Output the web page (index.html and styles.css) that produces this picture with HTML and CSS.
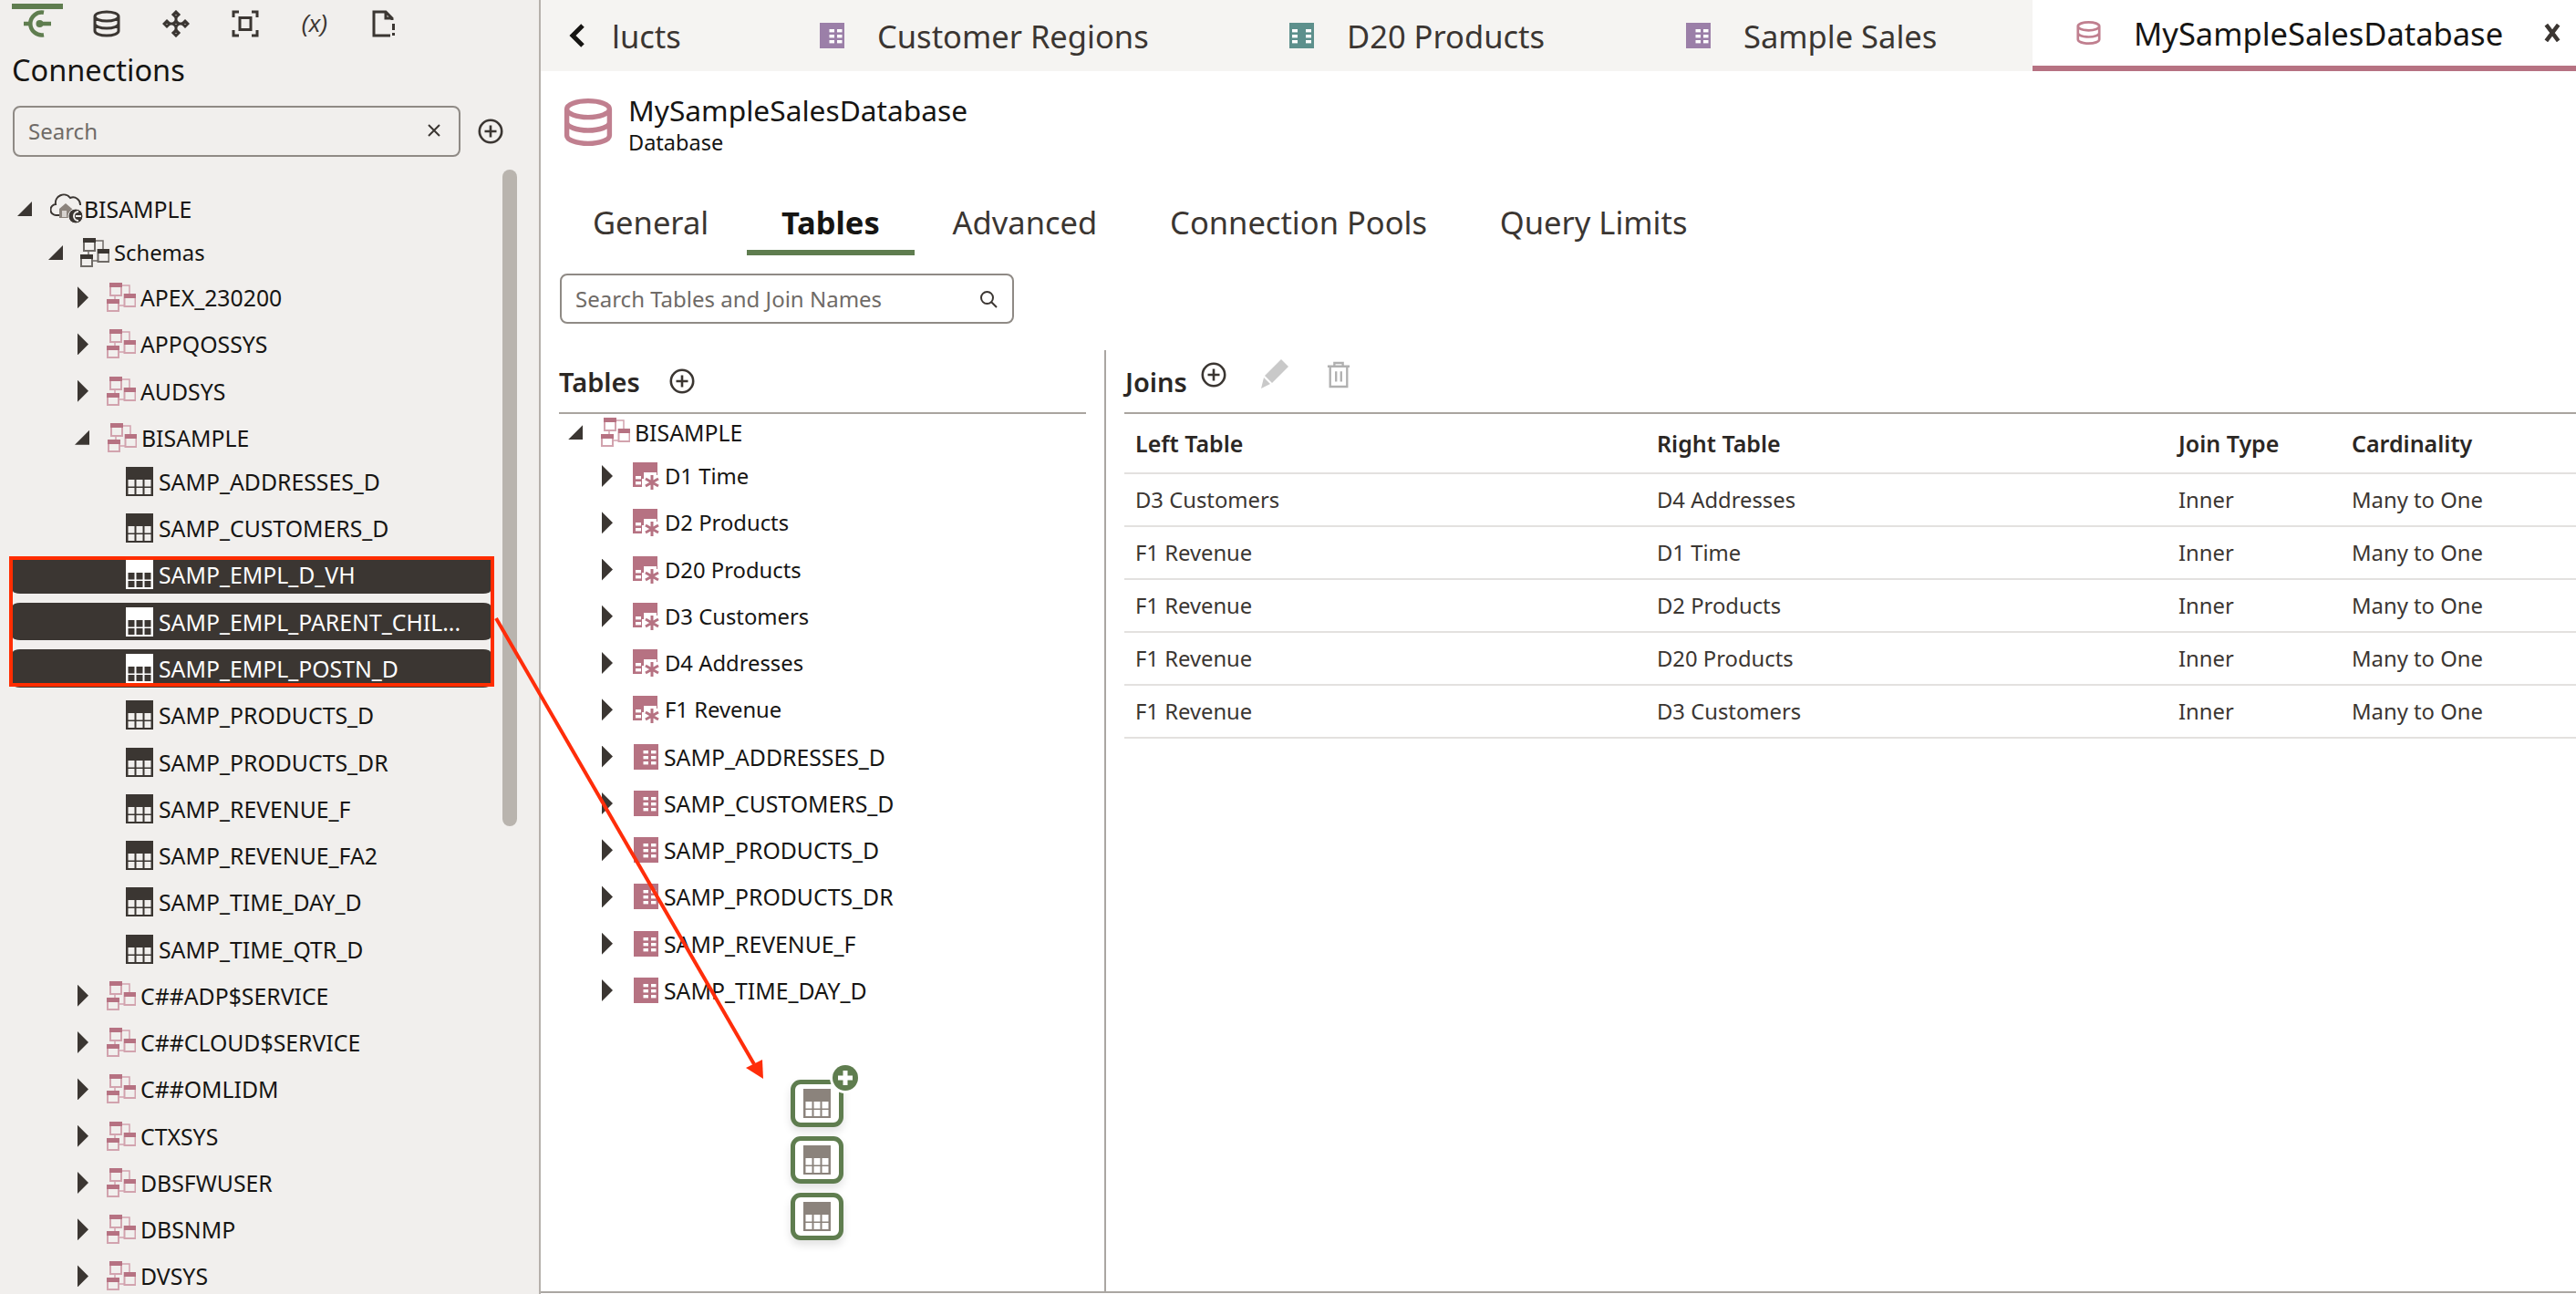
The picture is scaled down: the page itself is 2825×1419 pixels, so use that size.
FILE: index.html
```html
<!DOCTYPE html>
<html lang="en">
<head>
<meta charset="utf-8">
<title>MySampleSalesDatabase</title>
<link rel="stylesheet" href="styles.css">
</head>
<body>
<svg class="sprite" aria-hidden="true">
  <symbol id="i-schema" viewBox="0 0 32 32">
    <path class="thin" d="M16 3h9v9M9 14v4M13 25h6"/>
    <rect class="ln" x="4" y="1" width="12" height="13"/><rect class="fl" x="3" y="0" width="14" height="5"/>
    <rect class="ln" x="19.5" y="13" width="12" height="13"/><rect class="fl" x="19" y="12" width="13" height="5"/>
    <rect class="ln2" x="1" y="19" width="12" height="12"/><rect class="fl" x="0" y="18" width="14" height="5"/>
  </symbol>
  <symbol id="i-table" viewBox="0 0 30 32">
    <rect class="fl" x="0" y="0" width="30" height="32"/>
    <rect class="cell" x="2.5" y="14" width="7" height="7.5"/><rect class="cell" x="11.5" y="14" width="7" height="7.5"/><rect class="cell" x="20.5" y="14" width="7" height="7.5"/>
    <rect class="cell" x="2.5" y="23" width="7" height="7"/><rect class="cell" x="11.5" y="23" width="7" height="7"/><rect class="cell" x="20.5" y="23" width="7" height="7"/>
  </symbol>
  <symbol id="i-tile" viewBox="0 0 27 28">
    <rect class="fl" width="27" height="28"/>
    <g class="wh"><rect x="10.5" y="7" width="5.5" height="3.4"/><rect x="19" y="7" width="5.5" height="3.4"/><rect x="10.5" y="13" width="5.5" height="3.4"/><rect x="19" y="13" width="5.5" height="3.4"/><rect x="10.5" y="19" width="5.5" height="3.4"/><rect x="19" y="19" width="5.5" height="3.4"/></g>
  </symbol>
  <symbol id="i-film" viewBox="0 0 27 28">
    <rect class="fl" width="27" height="28"/>
    <g class="wh"><rect x="3" y="7" width="6" height="3.4"/><rect x="18" y="7" width="6" height="3.4"/><rect x="3" y="13" width="6" height="3.4"/><rect x="18" y="13" width="6" height="3.4"/><rect x="3" y="19" width="6" height="3.4"/><rect x="18" y="19" width="6" height="3.4"/></g>
  </symbol>
  <symbol id="i-dim" viewBox="0 0 30 30">
    <rect class="fl" width="27" height="27"/>
    <g class="wh"><rect x="3" y="15" width="6" height="3.4"/><rect x="3" y="21" width="6" height="3.4"/><rect x="12" y="11" width="14" height="8"/><rect x="10" y="18" width="6" height="9"/><rect x="14" y="14" width="16" height="16"/></g>
    <path class="star" d="M21 14v16M14 18l14 8M28 18l-14 8"/>
  </symbol>
  <symbol id="i-db" viewBox="0 0 30 30">
    <path class="st" d="M2 7a13 5 0 0 1 26 0v16a13 5 0 0 1-26 0zM2 7a13 5 0 0 0 26 0M2 15a13 5 0 0 0 26 0"/>
  </symbol>
  <symbol id="i-plus" viewBox="0 0 28 28">
    <circle class="st2" cx="14" cy="14" r="12.2"/><path class="st2" d="M14 7.5v13M7.5 14h13"/>
  </symbol>
</svg>

<div class="app">
  <aside class="side">
    <nav class="rail">
      <button class="rail-btn on"><svg class="rail-ico" viewBox="0 0 30 30"><path class="conn" d="M22 2.700A12.500 12.500 0 1 0 22 27.300M0 15h6M17 15h13"/><circle class="conn-dot" cx="17.500" cy="15" r="4"/></svg></button>
      <button class="rail-btn"><svg class="rail-ico"><use href="#i-db"/></svg></button>
      <button class="rail-btn"><svg class="rail-ico" viewBox="0 0 30 30"><path class="st" d="M15 6v6M15 18v6M6 15h6M18 15h6"/><path class="st" d="M15 2l3 3-3 3-3-3zM15 22l3 3-3 3-3-3zM5 12l3 3-3 3-3-3zM25 12l3 3-3 3-3-3zM15 12l3 3-3 3-3-3z"/></svg></button>
      <button class="rail-btn"><svg class="rail-ico" viewBox="0 0 30 30"><path class="st" d="M8 2H2v6M22 2h6v6M8 28H2v-6M22 28h6v-6"/><rect class="st" x="9" y="8.500" width="12" height="13"/></svg></button>
      <button class="rail-btn"><span class="fx">(x)</span></button>
      <button class="rail-btn"><svg class="rail-ico" viewBox="0 0 30 30"><path class="st" d="M24 11V9l-7-7H4v26h18M17 2v7h7"/><path class="st" d="M25.500 15v7M25.500 25v3"/></svg></button>
    </nav>
    <h2 class="side-title">Connections</h2>
    <div class="side-search">
      <div class="field field-side"><span class="ph">Search</span><svg class="x-ico" viewBox="0 0 14 14"><path d="M1 1l12 12M13 1L1 13"/></svg></div>
      <svg class="add-ico"><use href="#i-plus"/></svg>
    </div>
    <div class="tree">
      <div class="row l1"><i class="tw tw-d"></i>
        <svg class="ico ico-cloud" viewBox="0 0 37 34"><path class="st-thin" d="M10 24H7a6 6 0 0 1-1-12 9 9 0 0 1 16-7 8 8 0 0 1 11 8"/><path class="hs" d="M10 17l7-6 7 6v10H10z"/><rect class="hs-w" x="13" y="19" width="5" height="7"/><circle class="bd" cx="28" cy="25" r="8"/><path class="bd-c" d="M31 20a5 5 0 1 0 0 10M28 25h6"/></svg>
        <span>BISAMPLE</span></div>
      <div class="row l2"><i class="tw tw-d"></i><svg class="ico ico-s sch-dk"><use href="#i-schema"/></svg><span>Schemas</span></div>
      <div class="row l3 full"><i class="tw tw-r"></i><svg class="ico ico-s sch"><use href="#i-schema"/></svg><span>APEX_230200</span></div>
      <div class="row l3 full"><i class="tw tw-r"></i><svg class="ico ico-s sch"><use href="#i-schema"/></svg><span>APPQOSSYS</span></div>
      <div class="row l3 full"><i class="tw tw-r"></i><svg class="ico ico-s sch"><use href="#i-schema"/></svg><span>AUDSYS</span></div>
      <div class="row l3 tight"><i class="tw tw-d"></i><svg class="ico ico-s sch"><use href="#i-schema"/></svg><span>BISAMPLE</span></div>
      <div class="row l4 full"><svg class="ico ico-t tb"><use href="#i-table"/></svg><span>SAMP_ADDRESSES_D</span></div>
      <div class="row l4 full"><svg class="ico ico-t tb"><use href="#i-table"/></svg><span>SAMP_CUSTOMERS_D</span></div>
      <div class="row l4 full sel"><svg class="ico ico-t tb"><use href="#i-table"/></svg><span>SAMP_EMPL_D_VH</span></div>
      <div class="row l4 full sel"><svg class="ico ico-t tb"><use href="#i-table"/></svg><span>SAMP_EMPL_PARENT_CHIL...</span></div>
      <div class="row l4 full sel"><svg class="ico ico-t tb"><use href="#i-table"/></svg><span>SAMP_EMPL_POSTN_D</span></div>
      <div class="row l4 full"><svg class="ico ico-t tb"><use href="#i-table"/></svg><span>SAMP_PRODUCTS_D</span></div>
      <div class="row l4 full"><svg class="ico ico-t tb"><use href="#i-table"/></svg><span>SAMP_PRODUCTS_DR</span></div>
      <div class="row l4 full"><svg class="ico ico-t tb"><use href="#i-table"/></svg><span>SAMP_REVENUE_F</span></div>
      <div class="row l4 full"><svg class="ico ico-t tb"><use href="#i-table"/></svg><span>SAMP_REVENUE_FA2</span></div>
      <div class="row l4 full"><svg class="ico ico-t tb"><use href="#i-table"/></svg><span>SAMP_TIME_DAY_D</span></div>
      <div class="row l4 full"><svg class="ico ico-t tb"><use href="#i-table"/></svg><span>SAMP_TIME_QTR_D</span></div>
      <div class="row l3 full"><i class="tw tw-r"></i><svg class="ico ico-s sch"><use href="#i-schema"/></svg><span>C##ADP$SERVICE</span></div>
      <div class="row l3 full"><i class="tw tw-r"></i><svg class="ico ico-s sch"><use href="#i-schema"/></svg><span>C##CLOUD$SERVICE</span></div>
      <div class="row l3 full"><i class="tw tw-r"></i><svg class="ico ico-s sch"><use href="#i-schema"/></svg><span>C##OMLIDM</span></div>
      <div class="row l3 full"><i class="tw tw-r"></i><svg class="ico ico-s sch"><use href="#i-schema"/></svg><span>CTXSYS</span></div>
      <div class="row l3 full"><i class="tw tw-r"></i><svg class="ico ico-s sch"><use href="#i-schema"/></svg><span>DBSFWUSER</span></div>
      <div class="row l3 full"><i class="tw tw-r"></i><svg class="ico ico-s sch"><use href="#i-schema"/></svg><span>DBSNMP</span></div>
      <div class="row l3 full"><i class="tw tw-r"></i><svg class="ico ico-s sch"><use href="#i-schema"/></svg><span>DVSYS</span></div>
    </div>
    <div class="scrollbar"></div>
  </aside>

  <main class="main">
    <div class="tabbar">
      <div class="dtab dtab-first"><svg class="chev" viewBox="0 0 20 28"><path d="M16 3L5 14l11 11"/></svg><span class="lucts">lucts</span></div>
      <div class="dtab"><svg class="dtab-ico purple"><use href="#i-tile"/></svg><span>Customer Regions</span></div>
      <div class="dtab"><svg class="dtab-ico teal"><use href="#i-film"/></svg><span>D20 Products</span></div>
      <div class="dtab"><svg class="dtab-ico purple"><use href="#i-tile"/></svg><span>Sample Sales</span></div>
      <div class="dtab dtab-on"><svg class="dtab-db pinkline"><use href="#i-db"/></svg><span>MySampleSalesDatabase</span><svg class="tab-x" viewBox="0 0 18 18"><path d="M3 1l12 16M15 1L3 17"/></svg></div>
    </div>

    <header class="head">
      <svg class="head-ico pinkline"><use href="#i-db"/></svg>
      <div class="head-txt">
        <div class="head-title">MySampleSalesDatabase</div>
        <div class="head-sub">Database</div>
      </div>
    </header>

    <nav class="tabs">
      <a class="tab">General</a>
      <a class="tab tab-on">Tables</a>
      <a class="tab">Advanced</a>
      <a class="tab">Connection Pools</a>
      <a class="tab">Query Limits</a>
    </nav>

    <div class="field field-main"><span class="ph ph-sm">Search Tables and Join Names</span><svg class="mag" viewBox="0 0 20 20"><circle cx="8.500" cy="8.500" r="6.500"/><path d="M13 13l6 6"/></svg></div>

    <div class="split">
      <section class="left">
        <div class="sec-head"><h3 class="sec-title">Tables</h3><svg class="sec-add"><use href="#i-plus"/></svg></div>
        <div class="rtree">
          <div class="rrow r0"><i class="tw tw-d"></i><svg class="ico ico-s sch"><use href="#i-schema"/></svg><span>BISAMPLE</span></div>
          <div class="rrow r1"><i class="tw tw-r"></i><svg class="ico ico-d dim"><use href="#i-dim"/></svg><span>D1 Time</span></div>
          <div class="rrow r1"><i class="tw tw-r"></i><svg class="ico ico-d dim"><use href="#i-dim"/></svg><span>D2 Products</span></div>
          <div class="rrow r1"><i class="tw tw-r"></i><svg class="ico ico-d dim"><use href="#i-dim"/></svg><span>D20 Products</span></div>
          <div class="rrow r1"><i class="tw tw-r"></i><svg class="ico ico-d dim"><use href="#i-dim"/></svg><span>D3 Customers</span></div>
          <div class="rrow r1"><i class="tw tw-r"></i><svg class="ico ico-d dim"><use href="#i-dim"/></svg><span>D4 Addresses</span></div>
          <div class="rrow r1"><i class="tw tw-r"></i><svg class="ico ico-d dim"><use href="#i-dim"/></svg><span>F1 Revenue</span></div>
          <div class="rrow r2"><i class="tw tw-r"></i><svg class="ico ico-p dim"><use href="#i-tile"/></svg><span>SAMP_ADDRESSES_D</span></div>
          <div class="rrow r2"><i class="tw tw-r"></i><svg class="ico ico-p dim"><use href="#i-tile"/></svg><span>SAMP_CUSTOMERS_D</span></div>
          <div class="rrow r2"><i class="tw tw-r"></i><svg class="ico ico-p dim"><use href="#i-tile"/></svg><span>SAMP_PRODUCTS_D</span></div>
          <div class="rrow r2"><i class="tw tw-r"></i><svg class="ico ico-p dim"><use href="#i-tile"/></svg><span>SAMP_PRODUCTS_DR</span></div>
          <div class="rrow r2"><i class="tw tw-r"></i><svg class="ico ico-p dim"><use href="#i-tile"/></svg><span>SAMP_REVENUE_F</span></div>
          <div class="rrow r2"><i class="tw tw-r"></i><svg class="ico ico-p dim"><use href="#i-tile"/></svg><span>SAMP_TIME_DAY_D</span></div>
        </div>
      </section>
      <section class="right">
        <div class="join-head">
          <h3 class="sec-title">Joins</h3>
          <svg class="join-add"><use href="#i-plus"/></svg>
          <svg class="pencil" viewBox="0 0 32 36"><path d="M23 1l8 8L13 27l-8-8zM4 21l7 7-10 5z"/></svg>
          <svg class="trash" viewBox="0 0 28 32"><path d="M1 6h26M9 6V2h10v4M4 6v24h20V6M11 12v12M17 12v12"/></svg>
        </div>
        <table class="joins">
          <colgroup><col class="c1"><col class="c2"><col class="c3"><col></colgroup>
          <thead><tr><th>Left Table</th><th>Right Table</th><th>Join Type</th><th>Cardinality</th></tr></thead>
          <tbody>
            <tr><td>D3 Customers</td><td>D4 Addresses</td><td>Inner</td><td>Many to One</td></tr>
            <tr><td>F1 Revenue</td><td>D1 Time</td><td>Inner</td><td>Many to One</td></tr>
            <tr><td>F1 Revenue</td><td>D2 Products</td><td>Inner</td><td>Many to One</td></tr>
            <tr><td>F1 Revenue</td><td>D20 Products</td><td>Inner</td><td>Many to One</td></tr>
            <tr><td>F1 Revenue</td><td>D3 Customers</td><td>Inner</td><td>Many to One</td></tr>
          </tbody>
        </table>
      </section>
    </div>
  </main>
</div>

<div class="redbox"></div>
<svg class="arrow" viewBox="0 0 2825 1419"><path class="arrow-l" d="M544 678L827 1167"/><path class="arrow-h" d="M837 1183L818 1171 836 1162z"/></svg>
<div class="drag">
  <div class="tile"><svg class="tile-ico"><use href="#i-table"/></svg><svg class="badge" viewBox="0 0 34 34"><circle class="badge-o" cx="17" cy="17" r="17"/><circle class="badge-g" cx="17" cy="17" r="14"/><path class="badge-p" d="M17 9v16M9 17h16"/></svg></div>
  <div class="tile"><svg class="tile-ico"><use href="#i-table"/></svg></div>
  <div class="tile"><svg class="tile-ico"><use href="#i-table"/></svg></div>
</div>
</body>
</html>
```
FILE: styles.css
```css
*{box-sizing:border-box}
html,body{margin:0;height:1419px;overflow:hidden;background:#fff}
body{font-family:"Noto Sans","Open Sans",sans-serif;color:#161513;position:relative}
.sprite{position:absolute;width:0;height:0}
.app{display:flex;height:1419px}

/* shared svg parts */
.fl{fill:currentColor}
.wh{fill:#fff}
.cell{fill:var(--cell,#fff)}
.ln{fill:none;stroke:var(--soft,currentColor);stroke-width:2}
.ln2{fill:none;stroke:var(--soft,currentColor);stroke-width:2}
.thin{fill:none;stroke:var(--soft,currentColor);stroke-width:1.500}
.star{fill:none;stroke:currentColor;stroke-width:3}
.st{fill:none;stroke:currentColor;stroke-width:3}
.st2{fill:none;stroke:currentColor;stroke-width:2.600}
.st-thin{fill:none;stroke:currentColor;stroke-width:2}

/* sidebar */
.side{width:593px;flex:none;background:#f1efed;border-right:2px solid #b5b0ab;position:relative;overflow:hidden;display:flex;flex-direction:column}
.rail,.side-title,.side-search,.tree{flex:none}
.rail{display:flex;gap:20px;padding:4px 0 0 13px;height:48px}
.rail-btn{width:56px;height:38px;border:0;border-top:6px solid transparent;background:none;padding:0;display:flex;align-items:center;justify-content:center;color:#3b3632}
.rail-btn.on{border-top-color:#5f7d4f}
.rail-ico{width:30px;height:30px}
.conn{fill:none;stroke:#5f7d4f;stroke-width:4.500}
.conn-dot{fill:#5f7d4f}
.fx{font-size:25px;font-style:italic;font-weight:500;color:#3b3632}
.side-title{margin:9px 0 0 13px;font-size:32.500px;font-weight:400;line-height:40px;height:59px}
.side-search{display:flex;align-items:center;margin-left:14px;gap:19px}
.field{display:flex;align-items:center;justify-content:space-between;border:2px solid #8f8a85;border-radius:8px}
.field-side{width:491px;height:56px;padding:0 20px 2px 15px}
.field-main{width:498px;height:55px;margin:20px 0 0 21px;padding:0 16px 0 15px;background:#fff}
.ph{color:#6f6b67;font-size:24px}
.ph-sm{font-size:24px}
.x-ico{width:14px;height:14px;fill:none;stroke:#3b3632;stroke-width:2}
.mag{width:20px;height:20px;fill:none;stroke:#3b3632;stroke-width:2}
.add-ico{width:28px;height:28px;color:#3b3632}

.tree{margin-top:32.500px;font-size:24.800px;color:#161513}
.row{display:flex;align-items:center;height:49px;white-space:nowrap}
.l2{height:47px;font-size:23.800px}
.full{height:51.270px}
.tight{height:48px;padding-top:3px}
.tw{display:block;flex:none;background:#3b3632}
.tw-r{width:12px;height:24px;clip-path:polygon(0 0,100% 50%,0 100%)}
.tw-d{width:16px;height:16px;clip-path:polygon(0 100%,100% 0,100% 100%)}
.ico{flex:none;display:block}
.ico-s{width:32px;height:32px}
.ico-t{width:30px;height:32px}
.ico-d{width:30px;height:30px}
.ico-p{width:27px;height:28px}
.ico-cloud{width:37px;height:34px}
.sch{color:#b67282;--soft:#d2a3ae}
.sch-dk{color:#3b3632;--soft:#6f6b67}
.tb{color:#3b3632;--cell:#f1efed}
.dim{color:#b67282}
.st-thin,.hs,.hs-w{color:#3b3632}
.hs{fill:#8b837c}
.hs-w{fill:#d7d3cf}
.bd{fill:#3b3632;stroke:#f1efed;stroke-width:1}
.bd-c{fill:none;stroke:#f1efed;stroke-width:2}

.l1 .tw{margin-left:19px}
.l1 .ico{margin-left:20px}
.l1 span{margin-left:0}
.l2 .tw{margin-left:53px}
.l2 .ico{margin-left:19px}
.l2 span{margin-left:5px}
.l3 .tw{margin-left:85px}
.l3 .tw-d{margin-left:82px}
.l3 .ico{margin-left:20px}
.l3 span{margin-left:5px}
.l4 .ico{margin-left:138px}
.l4 span{margin-left:6px}
.sel{margin-left:14px;width:524px;background:#3b3632;background-clip:padding-box;border-block:5.600px solid transparent;border-radius:8px;color:#fff}
.sel .ico{margin-left:124px;color:#fff;--cell:#3b3632}
.scrollbar{position:absolute;left:551px;top:186px;width:16px;height:720px;background:#b9b4ae;border-radius:8px}

/* main */
.main{flex:1;min-width:0;display:flex;flex-direction:column;border-bottom:2px solid #aaa6a2;height:1418px}
.tabbar{display:grid;grid-template-columns:306px 515px 435px 380px 1fr;height:78px;background:#f5f4f2;flex:none;font-size:34.500px;color:#3b3632}
.dtab{display:flex;align-items:center;gap:36px;white-space:nowrap}
.dtab-first{gap:28px;padding-left:30px;overflow:hidden}
.chev{width:20px;height:28px;fill:none;stroke:#161513;stroke-width:5}
.dtab-ico{width:27px;height:28px}
.purple{color:#9b7fa8}
.teal{color:#5d908c}
.dtab-on{background:#fff;border-bottom:6px solid #b67282;padding:0 0 0 48px;color:#161513;gap:36px}
.dtab-db{width:27px;height:28px}
.pinkline{color:#c07f8f}
.tab-x{width:20px;height:20px;fill:none;stroke:#3b3632;stroke-width:4;margin-left:8px}
.head{display:flex;gap:18px;padding:29px 0 0 25px;height:127px;flex:none}
.head-ico{width:54px;height:54px;flex:none}
.head-txt{display:flex;flex-direction:column}
.head-title{font-size:31.700px;line-height:30px;margin-top:-1px;margin-left:-1px}
.head-sub{font-size:23.500px;line-height:28px;margin-top:6px;margin-left:-1px}
.tabs{display:flex;gap:3.800px;padding-left:19px;height:75px;flex:none}
.tab{display:flex;align-items:center;padding:8px 38px 0;font-size:34.500px;color:#3b3632;border-bottom:6px solid transparent;white-space:nowrap}
.tab-on{font-weight:700;color:#161513;border-bottom-color:#5f7d4f}
.split{display:grid;grid-template-columns:620px 1fr;margin-top:29px;flex:1;min-height:0}
.left{border-right:2px solid #aaa6a2;min-width:0}
.sec-head{display:flex;align-items:center;gap:32px;height:70px;margin:0 20px;border-bottom:2px solid #a9a49f}
.sec-title{margin:0;font-size:29px;font-weight:600;color:#2b2724}
.sec-add{width:28px;height:28px;color:#3b3632}
.rtree{font-size:24.800px}
.rrow{display:flex;align-items:center;height:51.270px;white-space:nowrap}
.r1{font-size:23.800px}
.r0{height:42.400px;padding-bottom:2px}
.r0 .tw{margin-left:30px}
.r0 .ico{margin-left:20px}
.r0 span{margin-left:5px}
.r1 .tw,.r2 .tw{margin-left:67px}
.r1 .ico{margin-left:22px}
.r1 span{margin-left:5px}
.r2 .ico{margin-left:23px}
.r2 span{margin-left:6px}
.right{padding-left:20px;min-width:0}
.join-head{display:flex;align-items:center;height:70px;border-bottom:2px solid #a9a49f;padding-left:1px}
.join-add{width:28px;height:28px;color:#3b3632;margin:-14px 0 0 15px}
.pencil{width:32px;height:36px;fill:#c9c9c9;margin:-14px 0 0 37px}
.trash{width:26px;height:30px;fill:none;stroke:#b0b0b0;stroke-width:2.500;margin:-14px 0 0 41px}
.joins{width:1592px;table-layout:fixed;border-collapse:collapse;font-size:23.800px;color:#3b3632}
.c1,.c2{width:572px}
.c3{width:190px}
.joins th{text-align:left;font-size:25px;font-weight:600;color:#2b2724;height:65px;padding:0 0 0 12px;border-bottom:2px solid #e3e1df}
.joins td{height:58px;padding:0 0 0 12px;border-bottom:2px solid #e3e1df}

/* annotations over the page */
.redbox{position:absolute;left:10px;top:610px;width:532px;height:143px;border:4.500px solid #ff2d00}
.arrow{position:absolute;left:0;top:0;width:2825px;height:1419px;pointer-events:none}
.arrow-l{stroke:#ff2d0a;stroke-width:4;fill:none}
.arrow-h{fill:#ff2d0a}
.drag{position:absolute;left:867px;top:1184px;display:flex;flex-direction:column;gap:10px}
.tile{position:relative;width:58px;height:52px;border:5px solid #5f7d4f;border-radius:11px;background:#fff;box-shadow:0 5px 10px rgba(0,0,0,.12);display:flex;align-items:center;justify-content:center}
.tile-ico{width:30px;height:32px;color:#8b837c;--cell:#fff}
.badge{position:absolute;left:38px;top:-24px;width:34px;height:34px}
.badge-o{fill:#fff}
.badge-g{fill:#5f7d4f}
.badge-p{stroke:#fff;stroke-width:5;fill:none}
```
